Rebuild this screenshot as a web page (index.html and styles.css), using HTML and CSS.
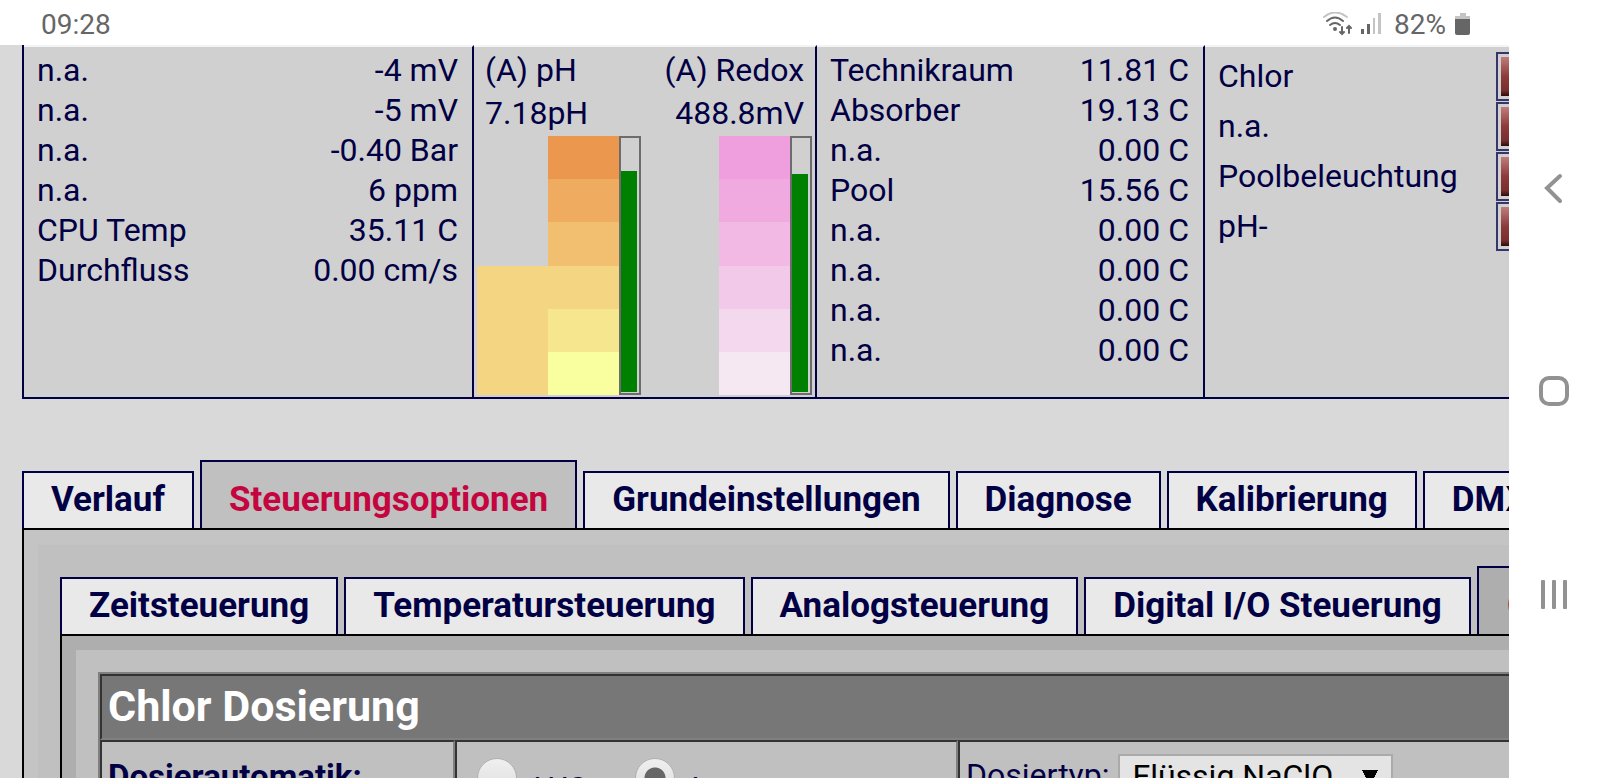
FILE: index.html
```html
<!DOCTYPE html>
<html lang="de">
<head>
    <meta charset="UTF-8">
    <meta name="viewport" content="width=device-width, initial-scale=1.0">
    <title>Poolsteuerung</title>
    <link rel="stylesheet" href="styles.css">
</head>
<body>
    <div class="screen">
        <header class="statusbar">
            <span>09:28</span>
            <div class="status-icons">
                <svg width="30" height="24" viewBox="0 0 30 24" fill="none" stroke-width="2" stroke-linecap="round">
                    <path d="M1 5Q12 -4 24 5" stroke="#c4c4c4"/>
                    <path d="M4 9Q12 2 20 9M7 13Q12 9 17 13" stroke="#666"/>
                    <circle cx="12" cy="17" r="2" fill="#666"/>
                    <path d="M19 15V22M17 20L19 22L21 20M26 21V14M24 16L26 14L28 16" stroke="#666"/>
                </svg>
                <svg class="signal" width="21" height="22" viewBox="0 0 21 22">
                    <path d="M0 16h3v5H0zM6 11h3v10H6z" fill="#666"/>
                    <path d="M12 5h2v16h-2zM17 0h3v21h-3z" fill="#c4c4c4"/>
                </svg>
                <span>82%</span>
                <svg class="battery" width="16" height="24" viewBox="0 0 16 24">
                    <path d="M5 1h6v3h4v4H0V4h5z" fill="#c4c4c4"/>
                    <path d="M0 7h15v14q0 2-2 2H2q-2 0-2-2z" fill="#666"/>
                </svg>
            </div>
        </header>

        <main class="page">
            <section class="overview">
                <div class="cell">
                    <table class="readings">
                        <tr><td>n.a.</td><td>-4 mV</td></tr>
                        <tr><td>n.a.</td><td>-5 mV</td></tr>
                        <tr><td>n.a.</td><td>-0.40 Bar</td></tr>
                        <tr><td>n.a.</td><td>6 ppm</td></tr>
                        <tr><td>CPU Temp</td><td>35.11 C</td></tr>
                        <tr><td>Durchfluss</td><td>0.00 cm/s</td></tr>
                    </table>
                </div>

                <div class="cell gauges">
                    <div class="gauge ph">
                        <div class="gauge-text">(A) pH<br>7.18pH</div>
                        <div class="chart">
                            <div class="current"></div>
                            <div class="scale">
                                <i></i><i></i><i></i><i></i><i></i><i></i>
                            </div>
                            <div class="bar"><div style="height: 87%"></div></div>
                        </div>
                    </div>
                    <div class="gauge redox">
                        <div class="gauge-text">(A) Redox<br>488.8mV</div>
                        <div class="chart">
                            <div class="scale">
                                <i></i><i></i><i></i><i></i><i></i><i></i>
                            </div>
                            <div class="bar"><div style="height: 86%"></div></div>
                        </div>
                    </div>
                </div>

                <div class="cell">
                    <table class="readings">
                        <tr><td>Technikraum</td><td>11.81 C</td></tr>
                        <tr><td>Absorber</td><td>19.13 C</td></tr>
                        <tr><td>n.a.</td><td>0.00 C</td></tr>
                        <tr><td>Pool</td><td>15.56 C</td></tr>
                        <tr><td>n.a.</td><td>0.00 C</td></tr>
                        <tr><td>n.a.</td><td>0.00 C</td></tr>
                        <tr><td>n.a.</td><td>0.00 C</td></tr>
                        <tr><td>n.a.</td><td>0.00 C</td></tr>
                    </table>
                </div>

                <div class="cell switches">
                    <div class="switch"><span>Chlor</span><button aria-label="Chlor"></button></div>
                    <div class="switch"><span>n.a.</span><button aria-label="n.a."></button></div>
                    <div class="switch"><span>Poolbeleuchtung</span><button aria-label="Poolbeleuchtung"></button></div>
                    <div class="switch"><span>pH-</span><button aria-label="pH-"></button></div>
                </div>
            </section>

            <nav class="tabs">
                <a href="#">Verlauf</a>
                <a href="#" class="active">Steuerungsoptionen</a>
                <a href="#">Grundeinstellungen</a>
                <a href="#">Diagnose</a>
                <a href="#">Kalibrierung</a>
                <a href="#">DMX</a>
            </nav>

            <div class="panel">
                <div class="panel-inner">
                    <nav class="tabs subtabs">
                        <a href="#">Zeitsteuerung</a>
                        <a href="#">Temperatursteuerung</a>
                        <a href="#">Analogsteuerung</a>
                        <a href="#">Digital I/O Steuerung</a>
                        <a href="#" class="active">Chlor</a>
                    </nav>

                    <div class="panel subpanel">
                        <div class="panel-inner">
                            <table class="dosing">
                                <colgroup>
                                    <col class="col-name">
                                    <col class="col-mode">
                                    <col>
                                </colgroup>
                                <tr>
                                    <th colspan="3" class="title">Chlor Dosierung</th>
                                </tr>
                                <tr>
                                    <th class="name">Dosierautomatik:</th>
                                    <td class="mode">
                                        <div class="radios">
                                            <label><input type="radio" name="auto">AUS</label>
                                            <label><input type="radio" name="auto" checked>Auto</label>
                                        </div>
                                    </td>
                                    <td class="type">
                                        <div class="field">
                                            <label for="dosiertyp">Dosiertyp:</label>
                                            <select id="dosiertyp">
                                                <option>Flüssig NaClO</option>
                                            </select>
                                        </div>
                                    </td>
                                </tr>
                            </table>
                        </div>
                    </div>
                </div>
            </div>
        </main>
    </div>

    <nav class="navbar">
        <button aria-label="Zurück">
            <svg width="32" height="32" viewBox="0 0 32 32" fill="none" stroke="#929292" stroke-width="4" stroke-linecap="round">
                <path d="M22 4L9 16L22 29"/>
            </svg>
        </button>
        <button aria-label="Home">
            <svg width="32" height="32" viewBox="0 0 32 32" fill="none" stroke="#929292" stroke-width="4">
                <rect x="3" y="3" width="26" height="26" rx="8"/>
            </svg>
        </button>
        <button aria-label="Letzte Apps">
            <svg width="32" height="32" viewBox="0 0 32 32" fill="#929292">
                <rect x="3" y="2" width="4" height="29" rx="1"/>
                <rect x="14" y="2" width="4" height="29" rx="1"/>
                <rect x="25" y="2" width="4" height="29" rx="1"/>
            </svg>
        </button>
    </nav>
</body>
</html>
```

FILE: styles.css
```css
* {
    box-sizing: border-box;
}

body {
    margin: 0;
    height: 100vh;
    display: flex;
    overflow: hidden;
    background-color: #fff;
    font-family: Roboto, sans-serif;
    font-size: 32px;
    color: #020044;
}

.screen {
    flex: 1;
    min-width: 0;
    display: flex;
    flex-direction: column;
}

/* Phone status bar */
.statusbar {
    height: 45px;
    flex-shrink: 0;
    display: flex;
    align-items: center;
    justify-content: space-between;
    padding: 4px 38px 0 41px;
    font-size: 28px;
    color: #666;
}

.status-icons {
    display: flex;
    align-items: center;
}

.status-icons svg {
    margin-bottom: 2px;
}

.status-icons .signal {
    margin-left: 8px;
    margin-right: 12px;
}

.status-icons .battery {
    margin-left: 9px;
}

.page {
    flex: 1;
    min-height: 0;
    overflow: hidden;
    padding-left: 22px;
    background-color: #d9d9d9;
}

/* Overview */
.overview {
    display: grid;
    grid-template-columns: 450px 343px 388px 380px;
    width: max-content;
    height: 354px;
    border-left: 2px solid #020044;
    border-bottom: 2px solid #020044;
}

.cell {
    border-top: 2px solid #f4f4f4;
    border-right: 2px solid #020044;
    background-color: #d0d0d0;
}

.readings {
    width: 100%;
    padding: 3px 14px 0 13px;
    border-spacing: 0;
}

.readings td {
    padding: 0;
    height: 40px;
    line-height: 40px;
}

.readings td:last-child {
    text-align: right;
}

.gauges {
    display: flex;
    justify-content: space-between;
    padding: 2px 3px 2px 3px;
}

.gauge {
    display: flex;
    flex-direction: column;
    justify-content: space-between;
}

.gauge-text {
    padding: 0 8px;
    line-height: 43px;
}

.redox .gauge-text {
    text-align: right;
}

.chart {
    display: flex;
    justify-content: flex-end;
    align-items: flex-end;
    height: 259px;
}

.current {
    width: 71px;
    height: 50%;
    background-color: #f4d581;
}

.scale {
    width: 71px;
    height: 100%;
    display: flex;
    flex-direction: column;
}

.scale i {
    flex: 1;
}

.ph i:nth-child(1) { background-color: #eb984e; }
.ph i:nth-child(2) { background-color: #efac60; }
.ph i:nth-child(3) { background-color: #f2bf70; }
.ph i:nth-child(4) { background-color: #f4d581; }
.ph i:nth-child(5) { background-color: #f6e78f; }
.ph i:nth-child(6) { background-color: #f9fe9e; }

.redox i:nth-child(1) { background-color: #ef9fdd; }
.redox i:nth-child(2) { background-color: #f0aae0; }
.redox i:nth-child(3) { background-color: #f2b9e4; }
.redox i:nth-child(4) { background-color: #f3c9ea; }
.redox i:nth-child(5) { background-color: #f4d8ee; }
.redox i:nth-child(6) { background-color: #f6e8f3; }

.bar {
    width: 22px;
    height: 100%;
    display: flex;
    align-items: flex-end;
    padding: 0 2px 1px 0;
    border: 2px solid #6c6c6c;
}

.bar div {
    width: 100%;
    background-color: #008000;
}

.switches {
    padding: 5px 11px 5px 13px;
}

.switch {
    display: flex;
    align-items: center;
    justify-content: space-between;
    height: 50px;
    line-height: 50px;
}

.switch span {
    padding-bottom: 3px;
}

.switch button {
    width: 76px;
    height: 49px;
    margin-bottom: 1px;
    padding: 3px;
    border: 2px solid #36366c;
    background: linear-gradient(#c07c7c, #8c3a3a 50%, #7a2f2f 85%, #2a0d0d) content-box #d6cece;
    cursor: pointer;
}

/* Tabs */
.tabs {
    display: flex;
    align-items: flex-end;
    gap: 6px;
    width: max-content;
    margin-top: 61px;
}

.tabs a {
    padding: 6px 27px 8px;
    border: 2px solid #020044;
    border-bottom: none;
    background-color: #e9e9e9;
    font-size: 35px;
    font-weight: bold;
    line-height: 41px;
    color: #020044;
    text-decoration: none;
}

.tabs .active {
    padding-top: 17px;
    background-color: #c0c0c0;
    color: #c4053f;
}

.subtabs {
    margin-top: 0;
}

.subtabs .active {
    padding-left: 28px;
    background-color: #aeaeae;
}

.panel {
    min-width: 1700px;
    padding: 15px 0 0 14px;
    border-top: 2px solid #000;
    border-left: 2px solid #000;
    background-color: #c4c4c4;
}

.panel-inner {
    padding: 21px 0 200px 22px;
    background-color: #c0c0c0;
}

.subpanel {
    padding-top: 14px;
    background-color: #aeaeae;
}

.subpanel .panel-inner {
    padding-top: 22px;
}

/* Dosing table */
.dosing {
    width: 100%;
    border: 2px solid #808080;
    border-spacing: 0;
    table-layout: fixed;
}

.col-name {
    width: 355px;
}

.col-mode {
    width: 503px;
}

.dosing th,
.dosing td {
    border: 2px solid #333;
    border-right-color: #808080;
    border-bottom-color: #808080;
    text-align: left;
    vertical-align: top;
}

.dosing .title {
    padding: 6px 6px 7px;
    background-color: #777;
    color: #fff;
    font-size: 43px;
    line-height: 49px;
}

.dosing .name {
    padding: 15px 6px;
    font-size: 33px;
    line-height: 40px;
}

.dosing .mode {
    padding: 16px 20px;
}

.dosing .type {
    padding: 12px 6px;
}

.radios {
    display: flex;
    gap: 30px;
}

.radios label {
    display: flex;
    gap: 10px;
    width: 128px;
    line-height: 60px;
}

.radios input {
    appearance: none;
    flex-shrink: 0;
    width: 40px;
    height: 40px;
    margin: 0;
    border: 1px solid #b0b0b0;
    border-radius: 50%;
    background: linear-gradient(#efefef, #dcdcdc);
}

.radios input:checked {
    background: radial-gradient(circle, #666 10px, transparent 11px), linear-gradient(#efefef, #dcdcdc);
}

.field {
    display: flex;
    gap: 9px;
    line-height: 43px;
}

.field select {
    appearance: none;
    width: 275px;
    height: 44px;
    padding: 0 12px;
    border: 2px solid #aaa;
    border-radius: 0;
    /* dropdown arrow */
    background: conic-gradient(from -28deg at 50% 100%, #000 56deg, transparent 0) no-repeat right 13px top 14px / 16px 15px #e4e4e4;
    font-family: inherit;
    font-size: 32px;
    color: #000;
}

/* Phone navigation buttons */
.navbar {
    width: 91px;
    display: flex;
    flex-direction: column;
    padding: 86px 0 82px;
}

.navbar button {
    flex: 1;
    display: flex;
    align-items: center;
    justify-content: center;
    padding: 0 1px 0 0;
    border: none;
    background: none;
}
```
